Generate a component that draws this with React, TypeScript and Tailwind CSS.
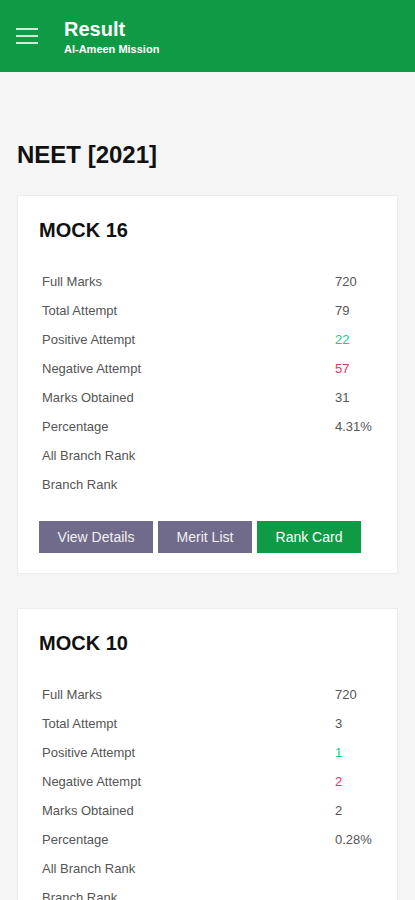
import React from "react";

type Row = { label: string; value?: string; tone?: "pos" | "neg" };

const MOCKS: { title: string; rows: Row[] }[] = [
  {
    title: "MOCK 16",
    rows: [
      { label: "Full Marks", value: "720" },
      { label: "Total Attempt", value: "79" },
      { label: "Positive Attempt", value: "22", tone: "pos" },
      { label: "Negative Attempt", value: "57", tone: "neg" },
      { label: "Marks Obtained", value: "31" },
      { label: "Percentage", value: "4.31%" },
      { label: "All Branch Rank" },
      { label: "Branch Rank" },
    ],
  },
  {
    title: "MOCK 10",
    rows: [
      { label: "Full Marks", value: "720" },
      { label: "Total Attempt", value: "3" },
      { label: "Positive Attempt", value: "1", tone: "pos" },
      { label: "Negative Attempt", value: "2", tone: "neg" },
      { label: "Marks Obtained", value: "2" },
      { label: "Percentage", value: "0.28%" },
      { label: "All Branch Rank" },
      { label: "Branch Rank" },
    ],
  },
];

function MockCard({ title, rows }: { title: string; rows: Row[] }) {
  return (
    <div className="bg-white border border-[#ececec] pt-[20px] pb-[20px]">
      <h2 className="pl-[21px] text-[20px] leading-[28px] font-bold text-[#111]">{title}</h2>

      {/* Result table */}
      <div className="mt-[23px] pl-[24px]">
        {rows.map((r) => (
          <div key={r.label} className="grid grid-cols-[293px_1fr] h-[29px] items-center text-[13px] text-[#555]">
            <span>{r.label}</span>
            <span
              className={
                r.tone === "pos" ? "text-[#22c97f]" : r.tone === "neg" ? "text-[#ea3560]" : ""
              }
            >
              {r.value ?? ""}
            </span>
          </div>
        ))}
      </div>

      {/* Actions */}
      <div className="mt-[22px] pl-[21px] flex gap-[5px] text-[14px] text-[#f0f0f0]">
        <button className="w-[114px] h-[32px] bg-[#706a8b]">View Details</button>
        <button className="w-[94px] h-[32px] bg-[#706a8b]">Merit List</button>
        <button className="w-[104px] h-[32px] bg-[#0f9b46] text-white">Rank Card</button>
      </div>
    </div>
  );
}

export default function App() {
  return (
    <div className="min-h-screen bg-[#f5f5f5]" style={{ fontFamily: '"Liberation Sans", Arial, sans-serif' }}>
      {/* Header */}
      <header className="h-[72px] bg-[#0f9b46] flex items-center pl-[16px]">
        <div className="flex flex-col gap-[5px] w-[22px]">
          <span className="block h-[2px] bg-white/80" />
          <span className="block h-[2px] bg-white/80" />
          <span className="block h-[2px] bg-white/80" />
        </div>
        <div className="ml-[26px] text-white mt-[2px]">
          <div className="text-[20px] leading-[22px] font-bold">Result</div>
          <div className="text-[11px] leading-[14px] font-bold mt-[2px]">Al-Ameen Mission</div>
        </div>
      </header>

      <main className="px-[17px] pt-[69px]">
        <h1 className="text-[24px] leading-[28px] font-bold text-[#111]">NEET [2021]</h1>
        <div className="mt-[26px] flex flex-col gap-[34px]">
          {MOCKS.map((m) => (
            <MockCard key={m.title} title={m.title} rows={m.rows} />
          ))}
        </div>
      </main>
    </div>
  );
}
